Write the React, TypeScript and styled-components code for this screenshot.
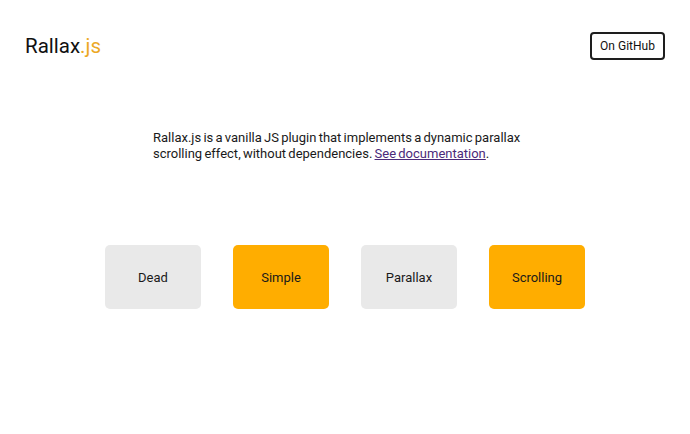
import React from 'react';
import styled, { createGlobalStyle } from 'styled-components';

const GlobalStyle = createGlobalStyle`
  html, body {
    margin: 0;
    padding: 0;
    background: #fff;
    font-family: Roboto, "Liberation Sans", Arial, sans-serif;
    color: #1a1a1a;
  }
`;

const Header = styled.header`
  display: flex;
  align-items: center;
  justify-content: space-between;
  padding: 32px 25px 0 25px;
  height: 28px;
`;

const Logo = styled.div`
  font-size: 20.5px;
  color: #111;
`;

const LogoAccent = styled.span`
  color: #eca825;
`;

const GithubButton = styled.a`
  display: inline-flex;
  align-items: center;
  justify-content: center;
  box-sizing: border-box;
  height: 28px;
  width: 75px;
  border: 2px solid #1e1e1e;
  border-radius: 4px;
  font-size: 12px;
  color: #111;
  text-decoration: none;
`;

const Intro = styled.p`
  max-width: 384px;
  margin: 70px auto 0;
  font-size: 13px;
  line-height: 15.6px;
  word-spacing: -1px;
  color: #1a1a1a;
`;

const DocLink = styled.a`
  color: #4b2a7a;
  text-decoration: underline;
`;

const Boxes = styled.div`
  display: flex;
  justify-content: center;
  gap: 32px;
  margin-top: 84px;
`;

const Box = styled.div<{ $accent?: boolean }>`
  width: 96px;
  height: 64px;
  border-radius: 5px;
  display: flex;
  align-items: center;
  justify-content: center;
  font-size: 13px;
  color: #1a1a1a;
  background: ${(p) => (p.$accent ? '#ffad00' : '#e9e9e9')};
`;

const items = [
  { label: 'Dead', accent: false },
  { label: 'Simple', accent: true },
  { label: 'Parallax', accent: false },
  { label: 'Scrolling', accent: true },
];

export default function App() {
  return (
    <>
      <GlobalStyle />
      <Header>
        <Logo>
          Rallax<LogoAccent>.js</LogoAccent>
        </Logo>
        <GithubButton href="#">On GitHub</GithubButton>
      </Header>
      <Intro>
        Rallax.js is a vanilla JS plugin that implements a dynamic parallax scrolling effect, without
        dependencies. <DocLink href="#">See documentation</DocLink>.
      </Intro>
      <Boxes>
        {items.map((it) => (
          <Box key={it.label} $accent={it.accent}>
            {it.label}
          </Box>
        ))}
      </Boxes>
    </>
  );
}
